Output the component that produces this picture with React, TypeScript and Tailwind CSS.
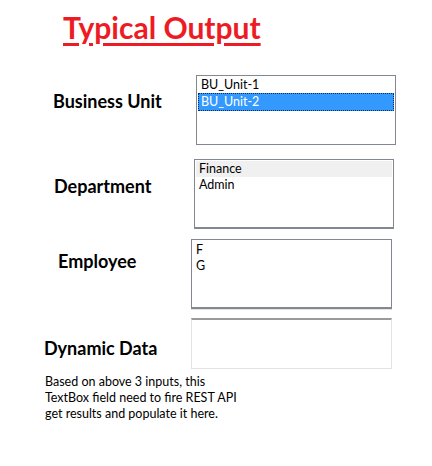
export default function App() {
  return (
    <div className="w-[432px] h-[466px] bg-white font-['Lato','Open_Sans',sans-serif] text-black relative">
      {/* Title */}
      <div className="pt-[10px] pl-[63px]">
        <h1 className="text-[30px] leading-[34px] font-bold text-[#ed1c24] underline decoration-[3px] underline-offset-[4px]">
          Typical Output
        </h1>
      </div>

      {/* Business Unit */}
      <div className="flex mt-[31px]">
        <div className="w-[196px] pl-[53px] pt-[16px] text-[18px] leading-[20px] font-bold">Business Unit</div>
        <div className="w-[200px] h-[70px] border border-[#828790] pt-[1px] px-[1px] text-[12.5px] leading-[16px]">
          <div className="pl-[3px]">BU_Unit-1</div>
          <div className="pl-[2px] bg-[#3399ff] text-white border border-dotted border-[#0a2d66]">BU_Unit-2</div>
        </div>
      </div>

      {/* Department */}
      <div className="flex mt-[14px]">
        <div className="w-[194px] pl-[54px] pt-[17px] text-[18px] leading-[20px] font-bold">Department</div>
        <div className="w-[200px] h-[70px] border border-b-2 border-[#828790] pt-[1px] px-[1px] text-[12.5px] leading-[16px]">
          <div className="pl-[3px] bg-[#f0f0f0]">Finance</div>
          <div className="pl-[3px]">Admin</div>
        </div>
      </div>

      {/* Employee */}
      <div className="flex mt-[10px]">
        <div className="w-[191px] pl-[58px] pt-[12px] text-[18px] leading-[20px] font-bold">Employee</div>
        <div className="w-[201px] h-[70px] border border-b-2 border-[#828790] pt-[2px] px-[1px] text-[12.5px] leading-[16px] shadow-[0_1px_0_#e3e3e3]">
          <div className="pl-[3px]">F</div>
          <div className="pl-[3px]">G</div>
        </div>
      </div>

      {/* Dynamic Data */}
      <div className="flex mt-[9px]">
        <div className="w-[191px] pl-[44px] pt-[20px] text-[18px] leading-[20px] font-bold">Dynamic Data</div>
        <div className="w-[201px] h-[51px] border border-t-2 border-[#e3e3e3] border-t-[#9a9a9a]" />
      </div>

      {/* Note */}
      <p className="pl-[45px] mt-[5px] text-[12.5px] leading-[16px]">
        Based on above 3 inputs, this
        <br />
        TextBox field need to fire REST API
        <br />
        get results and populate it here.
      </p>
    </div>
  );
}
